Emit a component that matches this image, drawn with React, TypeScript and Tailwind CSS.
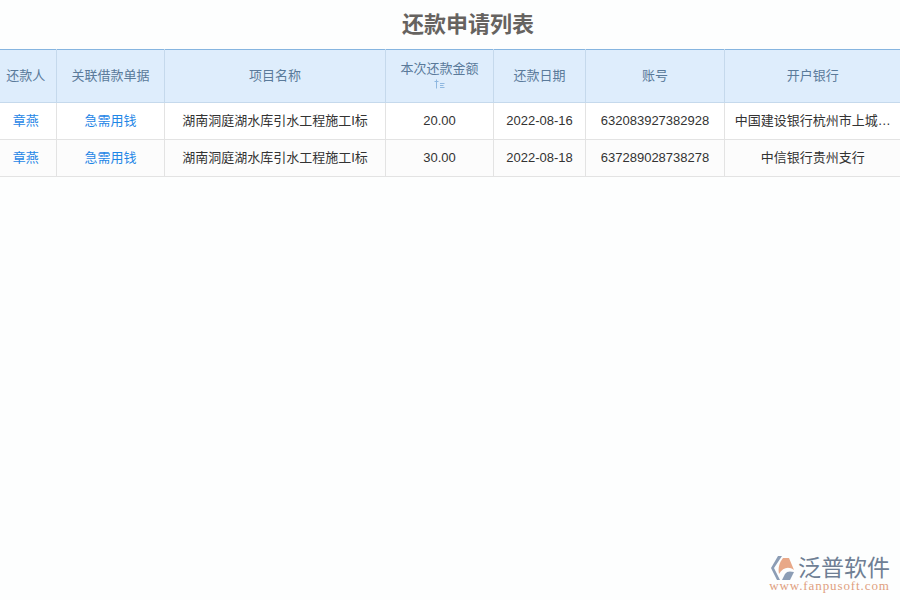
import React from 'react';

const rows = [
  { person: '章燕', loan: '急需用钱', project: '湖南洞庭湖水库引水工程施工I标', amount: '20.00', date: '2022-08-16', account: '632083927382928', bank: '中国建设银行杭州市上城…', bg: 'bg-white' },
  { person: '章燕', loan: '急需用钱', project: '湖南洞庭湖水库引水工程施工I标', amount: '30.00', date: '2022-08-18', account: '637289028738278', bank: '中信银行贵州支行', bg: 'bg-[#fcfcfc]' },
];

const th = 'border-r border-b border-[#c5d9ec] text-center font-normal text-[13px] text-[#5a7a9a] py-0 pr-0 pl-[1px]';
const td = 'border-r border-b border-[#e3e3e3] text-center text-[13px] h-[37px] py-0 pr-0 pl-[1px]';
const dark = 'text-[#333333]';
const link = 'text-[#1f86e6]';

export default function App() {
  return (
    <div className="relative w-[900px] h-[600px] overflow-hidden bg-[#fdfefe] font-['Liberation_Sans','Noto_Sans_CJK_SC',sans-serif]">
      <h1 className="h-[49px] pt-[9px] pl-[36px] text-center text-[22px] leading-[32px] font-bold text-[#666360]">还款申请列表</h1>

      <table className="w-[900px] table-fixed border-collapse border-t border-[#86b5e0]">
        <colgroup>
          <col className="w-[56px]" />
          <col className="w-[108px]" />
          <col className="w-[221px]" />
          <col className="w-[108px]" />
          <col className="w-[92px]" />
          <col className="w-[139px]" />
          <col className="w-[176px]" />
        </colgroup>
        <thead>
          <tr className="h-[53px] bg-[#deedfc]">
            <th className={`${th} pr-[5px]`}>还款人</th>
            <th className={th}>关联借款单据</th>
            <th className={th}>项目名称</th>
            <th className={th}>
              <div className="leading-[16px] pb-[2px]">本次还款金额</div>
              <div className="flex justify-center h-[13px]">
                <svg width="11" height="10" viewBox="0 0 11 10" fill="none" stroke="#8fb8e0" strokeWidth="1">
                  <path d="M2.5 0.5V9.5M0.5 2.5H4.5M6 4.5H10.5M6 6.5H9.5M6 8.5H10.5" />
                </svg>
              </div>
            </th>
            <th className={th}>还款日期</th>
            <th className={th}>账号</th>
            <th className={`${th} border-r-0`}>开户银行</th>
          </tr>
        </thead>
        <tbody>
          {rows.map((r, i) => (
            <tr key={i} className={r.bg}>
              <td className={`${td} ${link} pr-[5px]`}>{r.person}</td>
              <td className={`${td} ${link}`}>{r.loan}</td>
              <td className={`${td} ${dark}`}>{r.project}</td>
              <td className={`${td} ${dark}`}>{r.amount}</td>
              <td className={`${td} ${dark}`}>{r.date}</td>
              <td className={`${td} ${dark}`}>{r.account}</td>
              <td className={`${td} ${dark} border-r-0`}>{r.bank}</td>
            </tr>
          ))}
        </tbody>
      </table>

      {/* watermark */}
      <div className="absolute right-[10px] bottom-[9px] flex flex-col items-center">
        <div className="flex items-center gap-[2px] h-[26px]">
          <svg width="27" height="26" viewBox="0 0 27 26">
            <path d="M9 1H13L5 13L11 25H8L2 13Z" fill="#8c9db5" />
            <path d="M14 3H20L25 15C20 11 14 12 10 19C9 13 10 8 14 3Z" fill="#e8a888" />
            <path d="M13 25L16 19C18 16 21 16 25 17L21 25Z" fill="#8c9db5" />
          </svg>
          <div className="text-[23px] leading-[26px] text-[#6f7f94]">泛普软件</div>
        </div>
        <div className="font-['Liberation_Serif',serif] text-[13px] leading-[10px] tracking-[0.9px] text-[#e0a080]">www.fanpusoft.com</div>
      </div>
    </div>
  );
}
